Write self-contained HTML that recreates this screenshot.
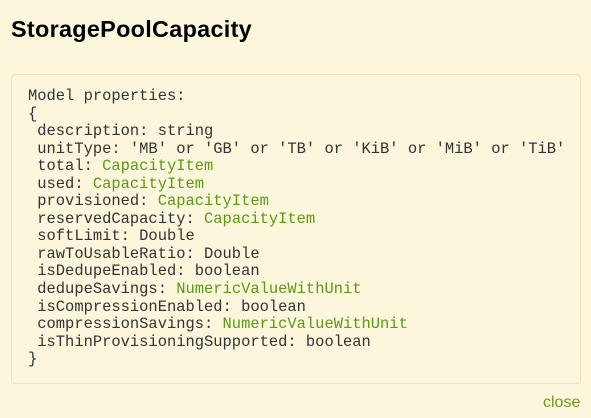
<!DOCTYPE html>
<html><head><style>
body{margin:0;background:#fcf6dc;width:591px;height:418px;overflow:hidden;font-family:"Liberation Sans",sans-serif;}
h1{position:absolute;left:11px;top:16px;margin:0;font-size:23.4px;font-weight:bold;color:#000;letter-spacing:0.3px}
.box{position:absolute;left:11px;top:74px;width:568px;height:308px;border:1px solid #ebe3c4;border-radius:4px;background:#fcf6dc}
pre{position:absolute;left:28px;top:88px;margin:0;font-family:"Liberation Mono",monospace;font-size:15.45px;line-height:17.55px;color:#333}
.g{color:#5a9a14}
.close{position:absolute;left:543px;top:394px;font-size:16px;color:#6d9a1c}
</style></head><body>
<h1>StoragePoolCapacity</h1>
<div class="box"></div>
<pre>Model properties:
{
 description: string
 unitType: 'MB' or 'GB' or 'TB' or 'KiB' or 'MiB' or 'TiB'
 total: <span class="g">CapacityItem</span>
 used: <span class="g">CapacityItem</span>
 provisioned: <span class="g">CapacityItem</span>
 reservedCapacity: <span class="g">CapacityItem</span>
 softLimit: Double
 rawToUsableRatio: Double
 isDedupeEnabled: boolean
 dedupeSavings: <span class="g">NumericValueWithUnit</span>
 isCompressionEnabled: boolean
 compressionSavings: <span class="g">NumericValueWithUnit</span>
 isThinProvisioningSupported: boolean
}</pre>
<div class="close">close</div>
</body></html>
